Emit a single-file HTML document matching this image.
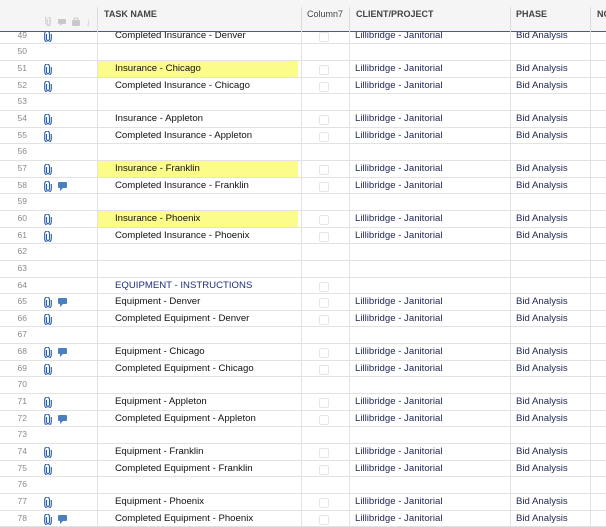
<!DOCTYPE html>
<html><head><meta charset="utf-8"><style>
*{margin:0;padding:0;box-sizing:border-box}
body{width:606px;height:527px;overflow:hidden;background:#fff;font-family:"Liberation Sans",Arial,sans-serif;position:relative}
.hdr{position:absolute;left:0;top:0;width:606px;height:32px;background:#f5f5f5;border-bottom:1px solid #4a5a8a;z-index:2}
.hdr div{position:absolute;top:0;height:31px;font-size:9px;color:#444;padding-top:9px}
.hdr .b{font-weight:bold}
.vl{position:absolute;top:7px;width:1px;height:25px;background:#ddd}
.rows{position:absolute;left:0;top:27.67px;width:606px}
.r{position:relative;height:16.667px;border-bottom:1px solid #e2e2e2;font-size:9.6px;line-height:15.4px}
.n{position:absolute;left:0;width:27px;text-align:right;color:#8a8a8a;font-size:8.5px}
.t{position:absolute;left:98px;width:200px;height:16px;padding-left:17px;color:#111;white-space:nowrap}
.t.h{background:#fcfc8a}
.t.e{color:#1f2f7a}
.c{position:absolute;left:355px;color:#232a55}
.p{position:absolute;left:516px;color:#232a55}
.cb{position:absolute;left:319px;top:4px;width:10px;height:10px;border:1px solid #e6e6e6;border-radius:2px}
.a{position:absolute;left:44px;top:3px}
.m{position:absolute;left:58px;top:4px}
.cl{position:absolute;top:27px;width:1px;height:500px;background:#e2e2e2;z-index:1}
</style></head><body>
<div class="hdr">
<div class="b" style="left:104px">TASK NAME</div>
<div style="left:307px">Column7</div>
<div class="b" style="left:356px">CLIENT/PROJECT</div>
<div class="b" style="left:516px">PHASE</div>
<div class="b" style="left:597px">NO</div>
<span class="vl" style="left:97px"></span><span class="vl" style="left:301px"></span><span class="vl" style="left:349px"></span><span class="vl" style="left:510px"></span><span class="vl" style="left:590px"></span>
<svg style="position:absolute;left:45px;top:17px" width="50" height="10"><g fill="#c8c8c8"><path d="M2 2v5a1.5 1.5 0 003 0V2a2.5 2.5 0 00-5 0v5" stroke="#c8c8c8" fill="none" stroke-width="1.2"/><rect x="13" y="2" width="8" height="5" rx="1"/><path d="M15 7l0 2 2-2z"/><rect x="27" y="3" width="8" height="6" rx="1"/><rect x="29" y="1" width="4" height="3" rx="1" fill="none" stroke="#c8c8c8"/><text x="42" y="9" font-size="9" font-style="italic" font-family="Liberation Serif">i</text></g></svg>
</div>
<span class="cl" style="left:97px"></span><span class="cl" style="left:301px"></span><span class="cl" style="left:349px"></span><span class="cl" style="left:510px"></span><span class="cl" style="left:590px"></span>
<div class="rows" id="rows"></div>
<script>
var A='<svg class="a" width="8" height="11"><path d="M2.5 3v5a1.5 1.5 0 003 0V2.5a2.4 2.4 0 00-4.8 0V8a3.3 3.3 0 006.6 0V3" stroke="#2a5db0" fill="none" stroke-width="1.1"/></svg>';
var M='<svg class="m" width="10" height="9"><rect x="0" y="0" width="9" height="6" rx="1" fill="#4a7fc0"/><path d="M2 6v3l3-3z" fill="#4a7fc0"/></svg>';
var d=[[49,'Completed Insurance - Denver',1,0,0],[50],[51,'Insurance - Chicago',1,0,1],[52,'Completed Insurance - Chicago',1,0,0],[53],[54,'Insurance - Appleton',1,0,0],[55,'Completed Insurance - Appleton',1,0,0],[56],[57,'Insurance - Franklin',1,0,1],[58,'Completed Insurance - Franklin',1,1,0],[59],[60,'Insurance - Phoenix',1,0,1],[61,'Completed Insurance - Phoenix',1,0,0],[62],[63],[64,'EQUIPMENT - INSTRUCTIONS',0,0,2],[65,'Equipment - Denver',1,1,0],[66,'Completed Equipment - Denver',1,0,0],[67],[68,'Equipment - Chicago',1,1,0],[69,'Completed Equipment - Chicago',1,0,0],[70],[71,'Equipment - Appleton',1,0,0],[72,'Completed Equipment - Appleton',1,1,0],[73],[74,'Equipment - Franklin',1,0,0],[75,'Completed Equipment - Franklin',1,0,0],[76],[77,'Equipment - Phoenix',1,0,0],[78,'Completed Equipment - Phoenix',1,1,0]];
var h='';
d.forEach(function(r){
h+='<div class="r"><span class="n">'+r[0]+'</span>';
if(r[1]){
h+=(r[2]?A:'')+(r[3]?M:'');
h+='<span class="t'+(r[4]==1?' h':r[4]==2?' e':'')+'">'+r[1]+'</span><span class="cb"></span>';
if(r[4]!=2)h+='<span class="c">Lillibridge - Janitorial</span><span class="p">Bid Analysis</span>';
}
h+='</div>';});
document.getElementById('rows').innerHTML=h;
</script>
</body></html>
